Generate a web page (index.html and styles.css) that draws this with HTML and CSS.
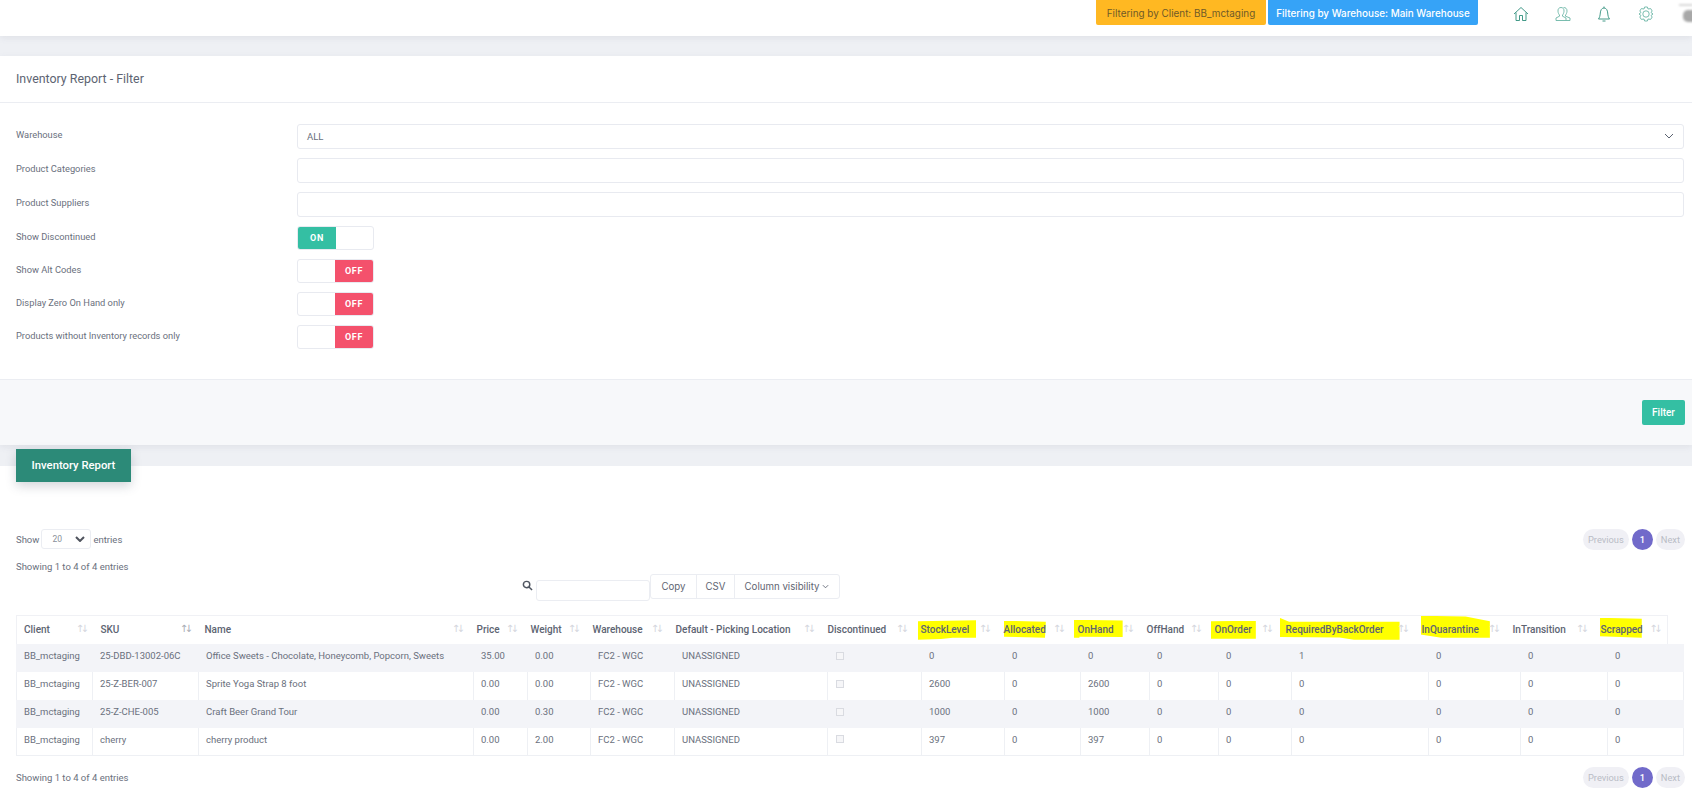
FILE: index.html
```html
<!DOCTYPE html>
<html lang="en">
<head>
<meta charset="utf-8">
<title>Inventory Report</title>
<link rel="stylesheet" href="styles.css">
</head>
<body>
<header class="topbar">
  <span class="pill pill-client">Filtering by Client: BB_mctaging</span>
  <span class="pill pill-warehouse">Filtering by Warehouse: Main Warehouse</span>
  <nav class="topicons">
    <svg class="ticon" viewBox="0 0 16 16"><path d="M1 8 8 1.500 15 8M3 6.500V14.500H6.500V9.500H9.500V14.500H13V6.500"/></svg>
    <svg class="ticon ticon-light" viewBox="0 0 16 16"><path d="M6 1.500C8 1.500 9.200 3 9 5.200 8.900 7 8.200 8.200 7.500 9L7.500 10.200 11 12V14.500H1V12L4.500 10.200V9C3.800 8.200 3.100 7 3 5.200 2.800 3 4 1.500 6 1.500ZM8.500 1.600C10.500 1.200 12.200 2.800 12 5.200 11.900 7 11.200 8.200 10.500 9V10.200L15 12V14.500H11"/></svg>
    <svg class="ticon" viewBox="0 0 16 16"><path d="M8 .5V2M8 2C5.500 2 4.500 4.500 4.300 7 4.100 9.800 3.600 11.500 2.500 13H13.500C12.400 11.500 11.900 9.800 11.700 7 11.500 4.500 10.500 2 8 2ZM6.500 15H9.500"/></svg>
    <svg class="ticon ticon-light" viewBox="0 0 16 16"><circle cx="8" cy="8" r="3.200"/><path d="M6.600 1H9.400L10 3 12.700 2.600 14.200 5 13 6.500 15 8 13 9.500 14.200 11 12.700 13.400 10 13 9.400 15H6.600L6 13 3.300 13.400 1.800 11 3 9.500 1 8 3 6.500 1.800 5 3.300 2.600 6 3Z"/></svg>
    <span class="avatar"></span>
  </nav>
</header>

<section class="card">
  <h1 class="card-title">Inventory Report - Filter</h1>
  <form class="filter-form">
    <div class="row">
      <label class="lbl">Warehouse</label>
      <div class="control select-control">ALL
        <svg class="chev" viewBox="0 0 10 6"><path d="M1 1 5 5 9 1"/></svg>
      </div>
    </div>
    <div class="row">
      <label class="lbl">Product Categories</label>
      <div class="control"></div>
    </div>
    <div class="row">
      <label class="lbl">Product Suppliers</label>
      <div class="control"></div>
    </div>
    <div class="row row-toggle">
      <label class="lbl">Show Discontinued</label>
      <div class="toggle"><span class="t-on">ON</span><span class="t-blank"></span></div>
    </div>
    <div class="row row-toggle">
      <label class="lbl">Show Alt Codes</label>
      <div class="toggle"><span class="t-blank"></span><span class="t-off">OFF</span></div>
    </div>
    <div class="row row-toggle">
      <label class="lbl">Display Zero On Hand only</label>
      <div class="toggle"><span class="t-blank"></span><span class="t-off">OFF</span></div>
    </div>
    <div class="row row-toggle">
      <label class="lbl">Products without Inventory records only</label>
      <div class="toggle"><span class="t-blank"></span><span class="t-off">OFF</span></div>
    </div>
  </form>
  <div class="card-foot"><button class="btn-filter" type="button">Filter</button></div>
</section>

<section class="report">
  <div class="tab">Inventory Report</div>
  <div class="bar-top">
    <div class="show">Show
      <span class="len">20<svg class="len-chev" viewBox="0 0 10 6"><path d="M1 1 5 5 9 1"/></svg></span>
      entries</div>
    <div class="pager">
      <span class="pg">Previous</span><span class="pg-cur">1</span><span class="pg">Next</span>
    </div>
  </div>
  <div class="info info-top">Showing 1 to 4 of 4 entries</div>
  <div class="toolbar">
    <svg class="search" viewBox="0 0 12 12"><circle cx="5" cy="5" r="3.500"/><path d="M7.600 7.600 11 11"/></svg>
    <div class="search-input"></div>
    <div class="btn-group">
      <span class="tb tb-copy">Copy</span><span class="tb tb-csv">CSV</span><span class="tb tb-col">Column visibility <svg class="tb-chev" viewBox="0 0 8 5"><path d="M1 1 4 4 7 1"/></svg></span>
    </div>
  </div>

  <table class="thead-table">
    <colgroup><col><col><col><col><col><col><col><col><col><col><col><col><col><col><col><col><col></colgroup>
    <thead>
      <tr>
        <th>Client<i class="sort">↑↓</i></th>
        <th>SKU<i class="sort sort-dark">↑↓</i></th>
        <th>Name<i class="sort">↑↓</i></th>
        <th>Price<i class="sort">↑↓</i></th>
        <th>Weight<i class="sort">↑↓</i></th>
        <th>Warehouse<i class="sort">↑↓</i></th>
        <th>Default - Picking Location<i class="sort">↑↓</i></th>
        <th>Discontinued<i class="sort">↑↓</i></th>
        <th><span class="hl hl-stock">StockLevel</span><i class="sort">↑↓</i></th>
        <th><span class="hl hl-alloc">Allocated</span><i class="sort">↑↓</i></th>
        <th><span class="hl hl-hand">OnHand</span><i class="sort">↑↓</i></th>
        <th>OffHand<i class="sort">↑↓</i></th>
        <th><span class="hl hl-order">OnOrder</span><i class="sort">↑↓</i></th>
        <th><span class="hl hl-req">RequiredByBackOrder</span><i class="sort">↑↓</i></th>
        <th><span class="hl hl-quar">InQuarantine</span><i class="sort">↑↓</i></th>
        <th>InTransition<i class="sort">↑↓</i></th>
        <th><span class="hl hl-scrap">Scrapped</span><i class="sort">↑↓</i></th>
      </tr>
    </thead>
  </table>
  <table class="tbody-table">
    <colgroup><col><col><col><col><col><col><col><col><col><col><col><col><col><col><col><col><col></colgroup>
    <tbody>
      <tr><td>BB_mctaging</td><td>25-DBD-13002-06C</td><td>Office Sweets - Chocolate, Honeycomb, Popcorn, Sweets</td><td>35.00</td><td>0.00</td><td>FC2 - WGC</td><td>UNASSIGNED</td><td><span class="chk"></span></td><td>0</td><td>0</td><td>0</td><td>0</td><td>0</td><td>1</td><td>0</td><td>0</td><td>0</td></tr>
      <tr><td>BB_mctaging</td><td>25-Z-BER-007</td><td>Sprite Yoga Strap 8 foot</td><td>0.00</td><td>0.00</td><td>FC2 - WGC</td><td>UNASSIGNED</td><td><span class="chk"></span></td><td>2600</td><td>0</td><td>2600</td><td>0</td><td>0</td><td>0</td><td>0</td><td>0</td><td>0</td></tr>
      <tr><td>BB_mctaging</td><td>25-Z-CHE-005</td><td>Craft Beer Grand Tour</td><td>0.00</td><td>0.30</td><td>FC2 - WGC</td><td>UNASSIGNED</td><td><span class="chk"></span></td><td>1000</td><td>0</td><td>1000</td><td>0</td><td>0</td><td>0</td><td>0</td><td>0</td><td>0</td></tr>
      <tr><td>BB_mctaging</td><td>cherry</td><td>cherry product</td><td>0.00</td><td>2.00</td><td>FC2 - WGC</td><td>UNASSIGNED</td><td><span class="chk"></span></td><td>397</td><td>0</td><td>397</td><td>0</td><td>0</td><td>0</td><td>0</td><td>0</td><td>0</td></tr>
    </tbody>
  </table>
  <div class="bar-bottom">
    <div class="info">Showing 1 to 4 of 4 entries</div>
    <div class="pager">
      <span class="pg">Previous</span><span class="pg-cur">1</span><span class="pg">Next</span>
    </div>
  </div>
</section>
</body>
</html>
```

FILE: styles.css
```css
* { box-sizing: border-box; }
html, body { margin: 0; height: 806px; overflow: hidden; }
body {
  background: #eef0f4;
  font-family: Roboto, "Liberation Sans", Arial, sans-serif;
  font-size: 9.5px;
  color: #6a707d;
}

/* top bar */
.topbar {
  height: 36px;
  background: #fff;
  box-shadow: 0 2px 6px rgba(120, 125, 150, .12);
  display: flex;
  align-items: flex-start;
  padding-left: 1096px;
  overflow: hidden;
}
.pill {
  flex: none;
  height: 25px;
  display: flex;
  align-items: center;
  justify-content: center;
  white-space: nowrap;
  border-radius: 0 0 2px 2px;
  font-family: Inter, "Noto Sans", sans-serif;
  font-size: 9.900px;
}
.pill-client { width: 170px; background: #ffb822; color: #6f5a28; }
.pill-warehouse { width: 210px; margin-left: 2px; background: #36a3f7; color: #fff; font-weight: 500; }
.topicons { flex: none; display: flex; align-items: center; margin-left: 35px; height: 27px; gap: 25.5px; }
.ticon { width: 16px; height: 16px; fill: none; stroke: #2f8f7c; stroke-width: .9; flex: none; }
.ticon-light { stroke: #6bb5a6; }
.avatar { position: relative; width: 16px; height: 12px; background: #a8a8a8; border-radius: 5px; flex: none; margin-left: 4px; margin-top: 5px; filter: blur(1px); }
.avatar::before { content: ""; position: absolute; left: -4px; top: -6px; width: 14px; height: 2px; background: #d8d8d8; }

/* filter card */
.card { margin-top: 20px; background: #fff; box-shadow: 0 2px 6px rgba(120, 125, 150, .12); }
.card-title {
  margin: 0;
  height: 47px;
  padding: 0 16px 1px;
  display: flex;
  align-items: center;
  border-bottom: 1px solid #ebedf2;
  font-size: 12.400px;
  font-weight: 400;
  color: #5d6472;
}
.filter-form { padding: 21px 8px 30px 16px; }
.row { display: grid; grid-template-columns: 281px 1fr; align-items: center; height: 25px; margin-bottom: 9px; }
.row-toggle { height: 24px; }
.row:last-child { margin-bottom: 0; }
.lbl { font-size: 9.300px; color: #6a707d; position: relative; top: -2px; }
.control {
  height: 25px;
  border: 1px solid #e8eaf0;
  border-radius: 3px;
  background: #fff;
  display: flex;
  align-items: center;
  justify-content: space-between;
  padding: 0 9px 1px 9px;
  color: #6a707d;
}
.chev { width: 10px; height: 6px; fill: none; stroke: #5a6270; stroke-width: 1; }
.toggle {
  width: 77px;
  height: 24px;
  border: 1px solid #e8eaf0;
  border-radius: 3px;
  display: flex;
  overflow: hidden;
}
.t-blank { width: 37px; flex: none; }
.t-on, .t-off {
  width: 38px;
  flex: none;
  display: flex;
  align-items: center;
  justify-content: center;
  color: #fff;
  font-size: 9px;
  font-weight: 700;
  letter-spacing: .6px;
}
.t-on { background: #34bfa3; }
.t-off { background: #f4516c; }
.card-foot {
  height: 66px;
  background: #f7f8fa;
  border-top: 1px solid #ebedf2;
  display: flex;
  align-items: flex-start;
  justify-content: flex-end;
  padding: 20px 7px 0 0;
}
.btn-filter {
  width: 43px;
  height: 25px;
  background: #34bfa3;
  color: #fff;
  border: 0;
  border-radius: 2px;
  font-family: inherit;
  font-size: 10px;
  font-weight: 500;
  padding: 0;
}

/* report */
.report { display: flow-root; margin-top: 21px; height: 340px; background: #fff; padding: 0 8px 0 16px; }
.tab {
  width: 115px;
  height: 33px;
  margin-top: -17px;
  background: #2c8a78;
  color: #fff;
  font-size: 11.300px;
  font-weight: 500;
  display: flex;
  align-items: center;
  justify-content: center;
  box-shadow: 0 4px 10px rgba(60, 70, 90, .22);
}
.bar-top { display: flex; justify-content: space-between; align-items: center; height: 22px; margin-top: 46px; }
.show { display: flex; align-items: center; gap: 2px; }
.len {
  width: 50px;
  height: 20px;
  border: 1px solid #ebedf2;
  border-radius: 3px;
  display: flex;
  align-items: center;
  justify-content: space-between;
  padding: 0 5px 0 10px;
  font-size: 8.500px;
  color: #8a8f9a;
}
.len-chev { width: 10px; height: 6px; fill: none; stroke: #50545e; stroke-width: 2; }
.pager { display: flex; gap: 3px; margin-right: -1px; }
.pg, .pg-cur {
  height: 21px;
  display: flex;
  align-items: center;
  justify-content: center;
  border-radius: 11px;
  font-size: 9.300px;
}
.pg { background: #f0f0f5; color: #b9bcc5; padding: 0 5px; }
.pg-cur { width: 21px; background: #716aca; color: #fff; font-weight: 500; }
.info-top { margin-top: 11px; line-height: 12px; }
.toolbar { display: flex; align-items: flex-start; height: 25px; margin-top: 1px; padding-left: 506px; }
.search { width: 11px; height: 11px; margin-top: 6px; fill: none; stroke: #4f5560; stroke-width: 1.600; }
.search-input { width: 114px; height: 21px; margin: 6px 0 0 3px; border: 1px solid #ebedf2; border-radius: 3px; }
.btn-group { display: flex; height: 25px; border: 1px solid #ebedf2; border-radius: 3px; font-family: Inter, "Noto Sans", sans-serif; font-size: 9.700px; color: #5f6572; }
.tb { display: flex; align-items: center; justify-content: center; gap: 3px; border-left: 1px solid #ebedf2; }
.tb-copy { width: 45px; border-left: 0; }
.tb-csv { width: 38px; }
.tb-col { width: 105px; }
.tb-chev { width: 7px; height: 5px; fill: none; stroke: #5f6572; stroke-width: 1; }

/* table */
table { border-collapse: collapse; table-layout: fixed; }
.thead-table { width: 1651px; margin-top: 16px; border: 1px solid #f0f1f5; border-bottom: 0; }
.tbody-table { width: 1667px; border-bottom: 1px solid #eef0f4; }
.thead-table col:nth-child(1) { width: 77px; }
.thead-table col:nth-child(2) { width: 104px; }
.thead-table col:nth-child(3) { width: 272px; }
.thead-table col:nth-child(4) { width: 54px; }
.thead-table col:nth-child(5) { width: 62px; }
.thead-table col:nth-child(6) { width: 83px; }
.thead-table col:nth-child(7) { width: 152px; }
.thead-table col:nth-child(8) { width: 93px; }
.thead-table col:nth-child(9) { width: 83px; }
.thead-table col:nth-child(10) { width: 74px; }
.thead-table col:nth-child(11) { width: 69px; }
.thead-table col:nth-child(12) { width: 68px; }
.thead-table col:nth-child(13) { width: 71px; }
.thead-table col:nth-child(14) { width: 136px; }
.thead-table col:nth-child(15) { width: 91px; }
.thead-table col:nth-child(16) { width: 88px; }
.thead-table col:nth-child(17) { width: 74px; }
.tbody-table col:nth-child(1) { width: 76px; }
.tbody-table col:nth-child(2) { width: 106px; }
.tbody-table col:nth-child(3) { width: 275px; }
.tbody-table col:nth-child(4) { width: 54px; }
.tbody-table col:nth-child(5) { width: 63px; }
.tbody-table col:nth-child(6) { width: 84px; }
.tbody-table col:nth-child(7) { width: 153px; }
.tbody-table col:nth-child(8) { width: 94px; }
.tbody-table col:nth-child(9) { width: 83px; }
.tbody-table col:nth-child(10) { width: 76px; }
.tbody-table col:nth-child(11) { width: 69px; }
.tbody-table col:nth-child(12) { width: 69px; }
.tbody-table col:nth-child(13) { width: 73px; }
.tbody-table col:nth-child(14) { width: 137px; }
.tbody-table col:nth-child(15) { width: 92px; }
.tbody-table col:nth-child(16) { width: 87px; }
.tbody-table col:nth-child(17) { width: 76px; }
th {
  position: relative;
  height: 28px;
  padding: 0 7px 1px;
  text-align: left;
  white-space: nowrap;
  font-size: 10px;
  font-weight: 500;
  color: #5d6472;
}
td {
  height: 28px;
  padding: 0 7px 4px;
  white-space: nowrap;
  font-size: 9.500px;
  color: #6a707d;
  border-left: 1px solid #eef0f4;
}
td:last-child { border-right: 1px solid #eef0f4; }
tbody tr:nth-child(odd) td { background: #f3f4f8; border-color: #f3f4f8; }
.sort {
  position: absolute;
  right: 8px;
  top: 7px;
  font-family: "DejaVu Sans", sans-serif;
  font-style: normal;
  font-weight: 400;
  font-size: 10px;
  line-height: 12px;
  letter-spacing: -3.500px;
  color: #d4d6dd;
}
.sort-dark { color: #a8acb5; }
.chk { display: block; width: 8px; height: 8px; margin-left: 1px; border: 1px solid #d9dbe1; background: #f6f6f8; }

/* marker strokes painted over the header labels */
.hl { position: relative; z-index: 0; }
.hl::before { content: ""; position: absolute; z-index: -1; background: #ffff00; }
.hl-stock::before { left: -3px; right: -7px; top: -4px; bottom: -5px; clip-path: polygon(0 8%, 100% 3%, 100% 90%, 60% 90%, 40% 96%, 0 100%); }
.hl-alloc::before { left: 0; right: 0; top: -3px; bottom: -3px; clip-path: polygon(0 0, 100% 6%, 98% 100%, 0 94%); }
.hl-hand::before { left: -4px; right: -9px; top: -4px; bottom: -3px; clip-path: polygon(0 0, 100% 4%, 100% 96%, 12% 94%, 12% 100%, 0 100%); }
.hl-order::before { left: -4px; right: -4px; top: -3px; bottom: -4px; clip-path: polygon(0 3%, 100% 0, 100% 100%, 0 100%); }
.hl-req::before { left: -6px; right: -16px; top: -6px; bottom: -5px; clip-path: polygon(0 0, 8% 18%, 100% 18%, 100% 100%, 62% 100%, 50% 90%, 0 88%); }
.hl-quar::before { left: -1px; right: -11px; top: -8px; bottom: -3px; clip-path: polygon(0 0, 65% 3%, 100% 25%, 100% 100%, 30% 100%, 0 85%); }
.hl-scrap::before { left: -1px; right: 1px; top: -6px; bottom: -3px; clip-path: polygon(0 0, 100% 5%, 100% 100%, 0 92%); }

.bar-bottom { display: flex; justify-content: space-between; align-items: center; height: 21px; margin-top: 11px; }
```
